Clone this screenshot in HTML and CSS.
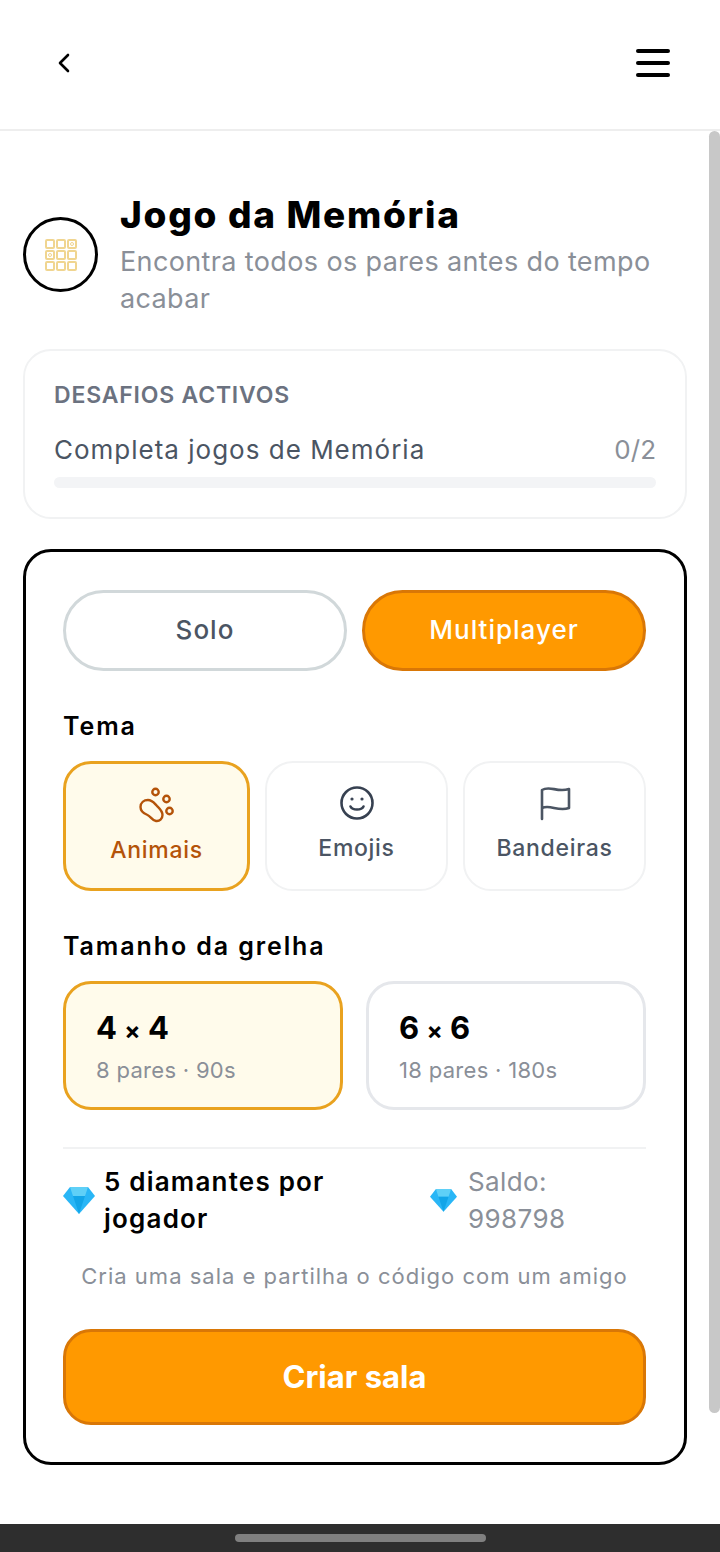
FILE: index.html
```html
<!DOCTYPE html>
<html lang="pt">
<head>
    <meta charset="UTF-8">
    <meta name="viewport" content="width=device-width, initial-scale=1.0">
    <title>Jogo da Memória</title>
    <link rel="stylesheet" href="styles.css">
</head>
<body>
<header class="topbar">
    <svg class="back" width="16" height="24" viewBox="0 0 16 24"><path d="M12 4 L4 12 L12 20" fill="none" stroke="#000" stroke-width="2.6" stroke-linecap="round" stroke-linejoin="round"/></svg>
    <div class="burger"><span></span><span></span><span></span></div>
</header>

<main class="content">
    <section class="intro">
        <div class="intro-icon">
            <svg width="34" height="34" viewBox="0 0 34 34" fill="none" stroke="#f0d590" stroke-width="2">
                <rect x="2" y="2" width="8" height="8" rx="1"/><rect x="13" y="2" width="8" height="8" rx="1"/><rect x="24" y="2" width="8" height="8" rx="1"/>
                <rect x="2" y="13" width="8" height="8" rx="1"/><rect x="13" y="13" width="8" height="8" rx="1"/><rect x="24" y="13" width="8" height="8" rx="1"/>
                <rect x="2" y="24" width="8" height="8" rx="1"/><rect x="13" y="24" width="8" height="8" rx="1"/><rect x="24" y="24" width="8" height="8" rx="1"/>
                <circle cx="28" cy="6" r="1.5" stroke-width="1"/><circle cx="6" cy="17" r="1.5" stroke-width="1"/>
            </svg>
        </div>
        <div class="intro-text">
            <h1>Jogo da Memória</h1>
            <p>Encontra todos os pares antes do tempo acabar</p>
        </div>
    </section>

    <section class="challenges">
        <h2>DESAFIOS ACTIVOS</h2>
        <div class="challenge-row"><span>Completa jogos de Memória</span><span class="count">0/2</span></div>
        <div class="progress"></div>
    </section>

    <section class="setup">
        <div class="modes">
            <div class="mode">Solo</div>
            <div class="mode mode-on">Multiplayer</div>
        </div>

        <h3 class="theme-title">Tema</h3>
        <div class="themes">
            <div class="theme theme-on">
                <svg width="40" height="40" viewBox="0 0 40 40" fill="none" stroke="#b45309" stroke-width="2.4">
                    <path d="M3.500 23 C3.500 18.500 7 16 11 16 C15.500 16 17 19 20 22 C23 25 25.500 27 25.500 31 C25.500 35 22.500 37.500 19 37 C15 36.500 14 32.500 10.500 31 C6.500 29.500 3.500 27.500 3.500 23 Z" stroke-linejoin="round"/>
                    <circle cx="18.500" cy="8" r="3.200"/><circle cx="29.500" cy="15" r="3.200"/><circle cx="32.500" cy="27" r="3.200"/>
                </svg>
                <span>Animais</span>
            </div>
            <div class="theme">
                <svg width="38" height="38" viewBox="0 0 38 38" fill="none" stroke="#374151" stroke-width="2.6" stroke-linecap="round">
                    <circle cx="19" cy="19" r="15.500"/>
                    <path d="M12.500 22.500 C14.500 26.500 23.500 26.500 25.500 22.500"/>
                    <circle cx="14" cy="15" r="1" fill="#374151" stroke-width="1.200"/><circle cx="24" cy="15" r="1" fill="#374151" stroke-width="1.200"/>
                </svg>
                <span>Emojis</span>
            </div>
            <div class="theme">
                <svg width="38" height="38" viewBox="0 0 38 38" fill="none" stroke="#4b5563" stroke-width="2.600" stroke-linecap="round" stroke-linejoin="round">
                    <path d="M6 35 V6 C14 1 21 9 33 5 V24 C22 28 14 20 6 24"/>
                </svg>
                <span>Bandeiras</span>
            </div>
        </div>

        <h3 class="grid-title">Tamanho da grelha</h3>
        <div class="sizes">
            <div class="size size-on"><strong>4 <i>×</i> 4</strong><span>8 pares · 90s</span></div>
            <div class="size"><strong>6 <i>×</i> 6</strong><span>18 pares · 180s</span></div>
        </div>

        <div class="cost-row">
            <div class="cost">
                <svg class="gem" width="32" height="28" viewBox="0 0 32 28"><path d="M7 1 H25 L32 10 L16 28 L0 10 Z" fill="#29b6f6"/><path d="M7 1 H25 L22 10 H10 Z" fill="#5fd0f7"/><path d="M10 10 H22 L16 28 Z" fill="#12a5e8"/></svg>
                <span>5 diamantes por jogador</span>
            </div>
            <div class="balance">
                <svg class="gem" width="27" height="24" viewBox="0 0 32 28"><path d="M7 1 H25 L32 10 L16 28 L0 10 Z" fill="#29b6f6"/><path d="M7 1 H25 L22 10 H10 Z" fill="#5fd0f7"/><path d="M10 10 H22 L16 28 Z" fill="#12a5e8"/></svg>
                <span>Saldo: 998798</span>
            </div>
        </div>

        <p class="hint">Cria uma sala e partilha o código com um amigo</p>
        <div class="create">Criar sala</div>
    </section>
</main>

<div class="scrollbar"></div>

<footer class="navbar"><div class="handle"></div></footer>
</body>
</html>
```
FILE: styles.css
```css
* {
    box-sizing: border-box;
}

body {
    margin: 0;
    height: 1552px;
    overflow: hidden;
    position: relative;
    display: flex;
    flex-direction: column;
    background: #fff;
    color: #000;
    font-family: Inter, "Open Sans", sans-serif;
}

h1, h2, h3, p {
    margin: 0;
}

.topbar {
    height: 131px;
    flex: none;
    border-bottom: 2px solid #eeeeee;
    display: flex;
    align-items: center;
    justify-content: space-between;
    padding: 0 50px 3px 56px;
}

.burger {
    width: 34px;
    display: flex;
    flex-direction: column;
    gap: 8px;
}

.burger span {
    height: 4px;
    border-radius: 2px;
    background: #000;
}

.content {
    flex: 1;
    padding: 64px 33px 0 23px;
}

.intro {
    display: flex;
    align-items: flex-start;
    gap: 22px;
}

.intro-icon {
    width: 75px;
    height: 75px;
    flex: none;
    margin-top: 22px;
    border: 3px solid #000;
    border-radius: 50%;
    display: flex;
    align-items: center;
    justify-content: center;
}

.intro h1 {
    font-size: 37px;
    line-height: 40px;
    font-weight: 800;
    letter-spacing: 1.7px;
}

.intro p {
    margin-top: 8px;
    font-size: 27px;
    line-height: 37px;
    letter-spacing: 0.37px;
    color: #8a8f98;
}

.challenges {
    margin-top: 32px;
    height: 170px;
    padding: 30px 29px 0;
    border: 2px solid #f1f2f3;
    border-radius: 28px;
}

.challenges h2 {
    font-size: 23px;
    line-height: 28px;
    font-weight: 600;
    letter-spacing: 0.8px;
    color: #6b7280;
}

.challenge-row {
    margin-top: 25px;
    display: flex;
    justify-content: space-between;
    font-size: 26px;
    line-height: 32px;
    letter-spacing: 1px;
    color: #4b5563;
}

.count {
    letter-spacing: 0;
    color: #8a8f98;
}

.progress {
    margin-top: 11px;
    height: 11px;
    border-radius: 6px;
    background: #f3f4f6;
}

.setup {
    margin-top: 30px;
    height: 916px;
    padding: 38px 38px 0 37px;
    border: 3px solid #000;
    border-radius: 28px;
}

.modes {
    display: grid;
    grid-template-columns: 1fr 1fr;
    gap: 15px;
}

.mode {
    height: 81px;
    padding-bottom: 2px;
    border: 3px solid #d1d8da;
    border-radius: 41px;
    display: flex;
    align-items: center;
    justify-content: center;
    font-size: 26px;
    font-weight: 500;
    letter-spacing: 1px;
    color: #4b5563;
}

.mode-on {
    background: #ff9900;
    border-color: #d97706;
    color: #fff;
}

.theme-title, .grid-title {
    font-size: 25px;
    line-height: 30px;
    font-weight: 600;
    letter-spacing: 1.9px;
}

.theme-title {
    margin-top: 40px;
}

.themes {
    margin-top: 20px;
    display: grid;
    grid-template-columns: 187fr 183fr 183fr;
    gap: 15px;
}

.theme {
    height: 130px;
    border: 2px solid #f1f2f3;
    border-radius: 28px;
    display: flex;
    flex-direction: column;
    align-items: center;
    padding-top: 21px;
    gap: 12px;
    font-size: 23px;
    line-height: 28px;
    font-weight: 500;
    letter-spacing: 0.7px;
    color: #4b5563;
}

.theme-on {
    background: #fffbeb;
    border: 3px solid #e9a21f;
    padding-top: 20px;
    color: #b45309;
}

.grid-title {
    margin-top: 40px;
}

.sizes {
    margin-top: 20px;
    display: grid;
    grid-template-columns: 1fr 1fr;
    gap: 23px;
}

.size {
    height: 129px;
    border: 3px solid #e5e7eb;
    border-radius: 28px;
    padding: 26px 30px 0;
    display: flex;
    flex-direction: column;
}

.size strong {
    font-size: 31px;
    line-height: 36px;
    font-weight: 700;
}

.size i {
    font-size: 24px;
    font-style: normal;
}

.size span {
    margin-top: 7px;
    font-size: 22px;
    line-height: 28px;
    letter-spacing: 0.3px;
    color: #8a8f98;
}

.size-on {
    background: #fffbeb;
    border-color: #e9a21f;
}

.cost-row {
    margin-top: 37px;
    padding-top: 14px;
    border-top: 2px solid #f1f2f3;
    display: flex;
    justify-content: space-between;
    align-items: center;
    font-size: 26px;
    line-height: 37px;
}

.cost, .balance {
    display: flex;
    align-items: center;
}

.cost {
    width: 280px;
    gap: 9px;
    font-weight: 600;
    letter-spacing: 1.2px;
}

.balance {
    width: 216px;
    gap: 11px;
    color: #8a8f98;
    letter-spacing: 0.4px;
}

.balance span {
    width: 110px;
}

.gem {
    flex: none;
}

.hint {
    margin-top: 25px;
    text-align: center;
    font-size: 22px;
    line-height: 28px;
    letter-spacing: 1px;
    color: #8a8f98;
}

.create {
    margin-top: 39px;
    height: 96px;
    padding-bottom: 2px;
    border: 3px solid #d97706;
    border-radius: 28px;
    background: #ff9900;
    color: #fff;
    display: flex;
    align-items: center;
    justify-content: center;
    font-size: 31px;
    font-weight: 700;
}

.scrollbar {
    position: absolute;
    top: 131px;
    right: 0;
    width: 11px;
    height: 1282px;
    border-radius: 6px;
    background: #c8c8c8;
}

.navbar {
    height: 28px;
    flex: none;
    background: #2e2e2e;
    display: flex;
    align-items: center;
    justify-content: center;
}

.handle {
    width: 251px;
    height: 8px;
    border-radius: 4px;
    background: #808080;
}
```
